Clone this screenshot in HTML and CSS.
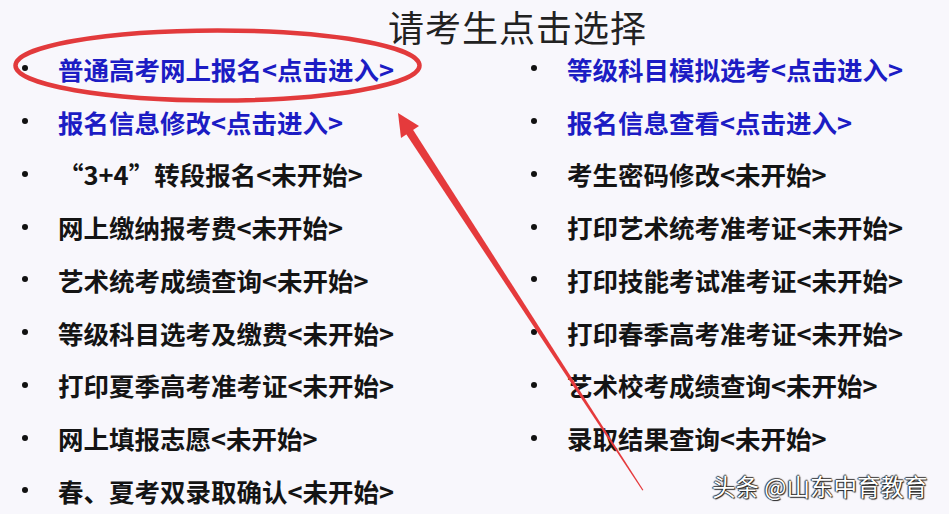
FILE: index.html
```html
<!DOCTYPE html>
<html lang="zh-CN">
<head>
<meta charset="utf-8">
<title>请考生点击选择</title>
<link rel="stylesheet" href="styles.css">
</head>
<body>
<div class="page">
  <h1 class="title">请考生点击选择</h1>
  <div class="cols">
    <ul class="list">
      <li class="item link"><span class="dot"></span><span>普通高考网上报名&lt;点击进入&gt;</span></li>
      <li class="item link"><span class="dot"></span><span>报名信息修改&lt;点击进入&gt;</span></li>
      <li class="item"><span class="dot"></span><span>“3+4”转段报名&lt;未开始&gt;</span></li>
      <li class="item"><span class="dot"></span><span>网上缴纳报考费&lt;未开始&gt;</span></li>
      <li class="item"><span class="dot"></span><span>艺术统考成绩查询&lt;未开始&gt;</span></li>
      <li class="item"><span class="dot"></span><span>等级科目选考及缴费&lt;未开始&gt;</span></li>
      <li class="item"><span class="dot"></span><span>打印夏季高考准考证&lt;未开始&gt;</span></li>
      <li class="item"><span class="dot"></span><span>网上填报志愿&lt;未开始&gt;</span></li>
      <li class="item"><span class="dot"></span><span>春、夏考双录取确认&lt;未开始&gt;</span></li>
    </ul>
    <ul class="list">
      <li class="item link"><span class="dot"></span><span>等级科目模拟选考&lt;点击进入&gt;</span></li>
      <li class="item link"><span class="dot"></span><span>报名信息查看&lt;点击进入&gt;</span></li>
      <li class="item"><span class="dot"></span><span>考生密码修改&lt;未开始&gt;</span></li>
      <li class="item"><span class="dot"></span><span>打印艺术统考准考证&lt;未开始&gt;</span></li>
      <li class="item"><span class="dot"></span><span>打印技能考试准考证&lt;未开始&gt;</span></li>
      <li class="item"><span class="dot"></span><span>打印春季高考准考证&lt;未开始&gt;</span></li>
      <li class="item"><span class="dot"></span><span>艺术校考成绩查询&lt;未开始&gt;</span></li>
      <li class="item"><span class="dot"></span><span>录取结果查询&lt;未开始&gt;</span></li>
    </ul>
  </div>

  <svg class="marks" width="949" height="514" viewBox="0 0 949 514" xmlns="http://www.w3.org/2000/svg">
    <ellipse cx="217.5" cy="65.5" rx="202" ry="35" fill="none" stroke="#e23a3c" stroke-width="4.5"/>
    <polygon points="405.6,133.2 412.4,128.8 643.4,490 642.4,490.6" fill="#e53a3c"/>
    <polygon points="398,113 401,138 419,126" fill="#e53a3c"/>
  </svg>

  <div class="watermark">头条 @山东中育教育</div>
</div>
</body>
</html>
```

FILE: styles.css
```css
html, body {
  margin: 0;
  padding: 0;
}
body {
  background: #f8f7fc;
  font-family: "Noto Sans CJK SC", "Noto Sans", sans-serif;
  color: #111;
}
.page {
  position: relative;
  width: 949px;
  height: 514px;
  overflow: hidden;
}
.title {
  margin: 0;
  padding-left: 388px;
  height: 42px;
  line-height: 52px;
  font-size: 36px;
  font-weight: 400;
  color: #222;
  letter-spacing: 1px;
}
.cols {
  display: grid;
  grid-template-columns: 509px 1fr;
  padding-left: 22px;
}
.list {
  list-style: none;
  margin: 0;
  padding: 0;
}
.item {
  display: flex;
  align-items: center;
  height: 52.75px;
  font-size: 25.5px;
  font-weight: 700;
  white-space: nowrap;
  color: #141414;
}
.item.link {
  color: #1c1cc4;
}
.dot {
  width: 6px;
  height: 6px;
  border-radius: 50%;
  background: #111;
  margin-right: 30px;
  flex: none;
}
.marks {
  position: absolute;
  left: 0;
  top: 0;
  pointer-events: none;
}
.watermark {
  position: absolute;
  left: 712px;
  top: 471px;
  font-size: 23.5px;
  line-height: 30px;
  color: #fff;
  text-shadow: 0 0 1px #111, 1px 1px 1px #222, -1px 0 1px #444, 0 -1px 1px #444;
}
```
